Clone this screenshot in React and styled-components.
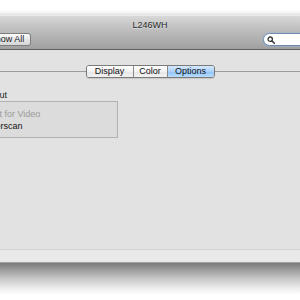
import React from 'react';
import styled, { createGlobalStyle } from 'styled-components';

const GlobalStyle = createGlobalStyle`
  html, body {
    margin: 0;
    background: #ffffff;
    overflow: hidden;
  }
  body {
    font-family: "Liberation Sans", Arial, sans-serif;
    font-size: 9px;
    color: #1e1e1e;
  }
`;

const Page = styled.div`
  width: 300px;
  height: 300px;
  padding-top: 15px;
  box-sizing: border-box;
  overflow: hidden;
`;

const Window = styled.div`
  margin: 0 -30px;
  box-shadow: 0 -1px 5px rgba(0, 0, 0, 0.18);
`;

const TitleBar = styled.div`
  height: 35px;
  box-sizing: border-box;
  background: linear-gradient(#d8d8d8, #bfbfbf 40%, #a0a0a0 100%);
  border-top: 1px solid #e9e9e9;
  border-bottom: 1px solid #5e5e5e;
  display: flex;
  flex-direction: column;
`;

const Title = styled.div`
  height: 14px;
  line-height: 14px;
  padding-top: 2px;
  text-align: center;
  font-size: 9px;
  color: #2a2a2a;
  text-shadow: 0 1px 0 rgba(255, 255, 255, 0.4);
`;

const Toolbar = styled.div`
  display: flex;
  align-items: center;
  justify-content: space-between;
  padding: 0 0 0 13px;
  margin-top: 1px;
`;

const Button = styled.div`
  width: 48px;
  height: 13px;
  box-sizing: border-box;
  border: 1px solid #7d7d7d;
  border-radius: 3px;
  background: linear-gradient(#fdfdfd, #e4e4e4 55%, #d6d6d6);
  line-height: 11px;
  text-align: center;
  font-size: 9px;
  color: #1a1a1a;
`;

const Search = styled.div`
  width: 45px;
  height: 13px;
  box-sizing: border-box;
  margin-right: 22px;
  border: 1px solid #6f8cb0;
  border-radius: 7px;
  background: #ffffff;
  box-shadow: 0 0 2px #8fb2dc;
  display: flex;
  align-items: center;
  padding-left: 3px;
`;

const Content = styled.div`
  height: 199px;
  background: #e2e2e2;
  padding-top: 15px;
  box-sizing: border-box;
`;

const TabRow = styled.div`
  display: flex;
  align-items: center;
  height: 13px;
`;

const Rule = styled.div`
  flex: 1;
  height: 1px;
  background: #9c9c9c;
`;

const Tabs = styled.div`
  display: flex;
  height: 13px;
  box-sizing: border-box;
  border: 1px solid #7a7a7a;
  border-radius: 3px;
  overflow: hidden;
  box-shadow: 0 1px 1px rgba(0, 0, 0, 0.12);
`;

const Tab = styled.div`
  width: ${(p) => p.$w}px;
  line-height: 11px;
  text-align: center;
  font-size: 9px;
  color: #111;
  background: ${(p) =>
    p.$active
      ? 'linear-gradient(#d6e9fd, #a9d1fb 50%, #8fc2f6 51%, #b9dcfd)'
      : 'linear-gradient(#ffffff, #f1f1f1 50%, #e6e6e6 51%, #f2f2f2)'};
  & + & {
    border-left: 1px solid #8a8a8a;
  }
`;

const Group = styled.div`
  margin-left: 6px;
  width: 142px;
  margin-top: 11px;
`;

const GroupLabel = styled.div`
  line-height: 12px;
  padding-left: 4px;
  color: #1e1e1e;
`;

const GroupBox = styled.div`
  border: 1px solid #b3b3b3;
  background: #dcdcdc;
  padding: 6px 0 5px 7px;
`;

const Item = styled.div`
  line-height: 12px;
  color: ${(p) => (p.$disabled ? '#9a9a9a' : '#111')};
`;

const BottomBar = styled.div`
  height: 14px;
  box-sizing: border-box;
  background: #e9e9e9;
  border-top: 1px solid #d3d3d3;
  border-bottom: 1px solid #a3a3a3;
`;

const Shadow = styled.div`
  height: 32px;
  margin: 0 -30px;
  background: linear-gradient(#7a7a7a, #9a9a9a 20%, #c9c9c9 50%, #eeeeee 80%, #ffffff);
`;

const Magnifier = () => (
  <svg width="8" height="8" viewBox="0 0 8 8">
    <circle cx="3.2" cy="3.2" r="2.2" fill="none" stroke="#3a3a3a" strokeWidth="1.3" />
    <path d="M4.8 4.8 L7.3 7.3" stroke="#3a3a3a" strokeWidth="1.6" strokeLinecap="round" />
  </svg>
);

export default function App() {
  return (
    <>
      <GlobalStyle />
      <Page>
        <Window>
          <TitleBar>
            <Title>L246WH</Title>
            <Toolbar>
              <Button>Show All</Button>
              <Search>
                <Magnifier />
              </Search>
            </Toolbar>
          </TitleBar>
          <Content>
            <TabRow>
              <Rule />
              <Tabs>
                <Tab $w={46}>Display</Tab>
                <Tab $w={33}>Color</Tab>
                <Tab $w={46} $active>Options</Tab>
              </Tabs>
              <Rule />
            </TabRow>
            <Group>
              <GroupLabel>Layout</GroupLabel>
              <GroupBox>
                <Item $disabled>Best for Video</Item>
                <Item>Overscan</Item>
              </GroupBox>
            </Group>
          </Content>
          <BottomBar />
        </Window>
        <Shadow />
      </Page>
    </>
  );
}
